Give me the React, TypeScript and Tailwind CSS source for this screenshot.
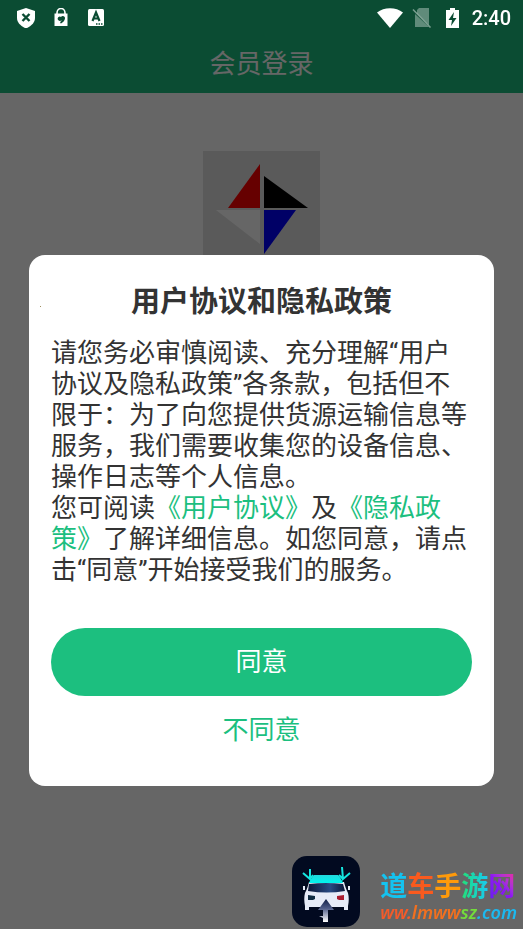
const TITLE = '用户协议和隐私政策'

const SITE_NAME = [
  { char: '道', color: 'text-[#14c3f0]' },
  { char: '车', color: 'text-[#fa5a1e]' },
  { char: '手', color: 'text-[#ff9a0a]' },
]

function StatusBar() {
  return (
    <div className="flex h-9 items-center justify-between pl-4 pr-3 text-white">
      <div className="flex items-center gap-4">
        <svg className="h-5 w-5" viewBox="0 0 20 20" aria-hidden="true">
          <path fill="currentColor" d="M10 0 19 3v7c0 4.500-3.500 8-9 10.500C4.500 18 1 14.500 1 10V3z" />
          <path stroke="#0b4c33" strokeWidth="2.400" d="m6.500 6 7 7m0-7-7 7" />
        </svg>
        <svg className="h-5 w-5" viewBox="0 0 20 20" aria-hidden="true">
          <path fill="none" stroke="currentColor" strokeWidth="1.600" d="M5 7V5a4 4.500 0 0 1 8 0v2" />
          <path fill="currentColor" d="M2.500 5.500h13v12.500h-13z" />
          <path fill="#0b4c33" d="M9 9c1-2 4.500-1 4 1.500-.3 2-2 4-4 5-.8-.5-1-1.200-.6-1.800l1.600-1.300-2.300.6c-2.300-1-2.500-2.800-1.500-3.800s2.400-.8 2.800-.2z" />
        </svg>
        <svg className="h-5 w-5" viewBox="0 0 20 20" aria-hidden="true">
          <rect x="0" y="1" width="16" height="17" rx="1.500" fill="currentColor" />
          <path fill="none" stroke="#0b4c33" strokeWidth="2.200" d="m4.500 13 3.500-8.500 3.500 8.500M6 10.500h4" />
          <path stroke="#0b4c33" strokeWidth="1.500" strokeDasharray="1.500 1" d="M8 16h7" />
        </svg>
      </div>
      <div className="flex items-center gap-2">
        <svg className="h-5 w-7" viewBox="0 0 28 20" aria-hidden="true">
          <path fill="currentColor" d="M1 4.500C8-1.300 20-1.300 27 4.500L14 20z" />
        </svg>
        <svg className="h-5 w-5" viewBox="0 0 20 20" aria-hidden="true">
          <path fill="currentColor" fillOpacity=".35" d="M7 0h10v17L5 5V2zM3 6l14 13H3z" />
          <path stroke="currentColor" strokeOpacity=".45" strokeWidth="1.500" d="m1 1.500 17.500 18" />
        </svg>
        <svg className="ml-1 h-5 w-5" viewBox="0 0 20 20" aria-hidden="true">
          <path fill="currentColor" d="M6 0h5v2h4v18H2V2h4z" />
          <path fill="#0b4c33" d="M10 4 4.500 12H8l-1 6 5.500-8H9z" />
        </svg>
        <span className="font-[Roboto] text-xl font-medium">2:40</span>
      </div>
    </div>
  )
}

function BrandLogo() {
  return (
    <svg className="h-[117px] w-[117px] bg-[#e2e2e2]" viewBox="0 0 117 117" role="img" aria-label="logo">
      <path fill="#ff0000" d="M57 13v44H25z" />
      <path fill="#000000" d="M61 25v32h44z" />
      <path fill="#ffffff" d="M13 59h44v34z" />
      <path fill="#0000ff" d="M61 59h32l-32 44z" />
    </svg>
  )
}

function CarBadge() {
  return (
    <svg className="h-[71px] w-[68px]" viewBox="0 0 68 71" aria-hidden="true">
      <defs>
        <linearGradient id="roof" x2="0" y2="1">
          <stop stopColor="#23d8dd" />
          <stop offset="1" stopColor="#00f5ee" />
        </linearGradient>
        <linearGradient id="glass">
          <stop stopColor="#0b1738" />
          <stop offset=".6" stopColor="#294a83" />
          <stop offset="1" stopColor="#0b1738" />
        </linearGradient>
        <linearGradient id="arrow" x2="0" y2="1">
          <stop stopColor="#101e45" />
          <stop offset=".4" stopColor="#4d5a86" />
          <stop offset="1" stopColor="#ffffff" />
        </linearGradient>
      </defs>
      <rect width="68" height="71" rx="15" fill="#020a20" />
      <path fill="#e6ebf7" d="M17 26c-1 4-2 7-4 11-1 4-1 8 0 13v4h4v-3h35v3h4v-4c1-5 1-9 0-13-2-4-3-7-4-11z" />
      <path fill="url(#roof)" d="M22 19c-2 2-4 5-5 8h34c-1-3-3-6-5-8z" />
      <path fill="url(#glass)" d="M17 28q17-2 34 0l2 7q-18 3-37 0z" />
      <path fill="#e6ebf7" d="M11 30h2v4h-2zM56 30h2v4h-2z" />
      <path fill="#102c42" d="m16 39 7 1v3l-2 1h-5z" />
      <path fill="#a91d30" d="m52 39-7 1v3l2 1h5z" />
      <path fill="url(#arrow)" d="m34 43 8 11h-6v12h-5v-4l-4-2h4v-6h-5z" />
      <path fill="none" stroke="#15e5df" strokeWidth="2" d="m11 17 7 6V13m0 10 3-4M58 17l-7 6-1-12m1 12-4-4" />
    </svg>
  )
}

function Watermark() {
  return (
    <div className="fixed right-1.5 bottom-0.5 z-20 flex items-center gap-5">
      <CarBadge />
      <div className="flex flex-col pt-3 font-['Noto_Sans','Noto_Sans_CJK_SC',sans-serif]">
        <span className="flex text-[27px] leading-7 font-bold">
          {SITE_NAME.map(item => (
            <span key={item.char} className={item.color}>{item.char}</span>
          ))}
          <span className="bg-linear-to-r from-[#27df70] to-[#1fc9f0] bg-clip-text text-transparent">游</span>
          <span className="bg-linear-to-bl from-[#f01f9b] via-[#8e17f2] to-[#641df1] bg-clip-text text-transparent">网</span>
        </span>
        <a href="#" className="text-lg leading-6 font-semibold italic">
          <span className="text-[#f45b2a]">ww.</span>
          <span className="text-[#f2701f]">lmww</span>
          <span className="text-[#73dd3c]">sz</span>
          <span className="text-[#1cb9ef]">.com</span>
        </a>
      </div>
    </div>
  )
}

function AgreementDialog() {
  return (
    <div className="fixed inset-0 z-10 flex items-start bg-black/60 px-[29px] pt-[255px]">
      <div
        role="dialog"
        aria-modal="true"
        aria-labelledby="agreement-title"
        className="relative flex w-full flex-col rounded-2xl bg-white px-[22px] pb-[22px] pt-[29px]"
      >
        <span className="absolute top-[51px] left-[11px] h-px w-px bg-[#a09060]" />
        <h2 id="agreement-title" className="text-center text-[29px] leading-9 font-bold text-[#333]">
          {TITLE}
        </h2>

        <div className="mt-[18px] text-[26px] leading-[31px] text-[#333]">
          <p>
            请您务必审慎阅读、充分理解“用户协议及隐私政策”各条款，包括但不限于：为了向您提供货源运输信息等服务，我们需要收集您的设备信息、操作日志等个人信息。
          </p>
          <p>
            您可阅读<a href="#" className="text-[#1cbf7f]">《用户协议》</a>及<a href="#" className="text-[#1cbf7f]">《隐私政策》</a>了解详细信息。如您同意，请点击“同意”开始接受我们的服务。
          </p>
        </div>

        <button type="button" className="mt-[42px] h-[68px] rounded-full bg-[#1cbf7f] text-[26px] text-white">
          同意
        </button>
        <button type="button" className="h-[68px] text-[26px] text-[#1cbf7f]">
          不同意
        </button>
      </div>
    </div>
  )
}

export default function App() {
  return (
    <div className="min-h-screen bg-white font-[Roboto,'Noto_Sans_CJK_SC',sans-serif]" lang="zh-CN">
      {/* status icons sit above the scrim, the header below it */}
      <div className="fixed inset-x-0 top-0 z-20">
        <StatusBar />
      </div>
      <header className="flex h-[93px] items-center justify-center bg-[#1cbf7f] pt-9">
        <h1 className="text-[26px] text-white">会员登录</h1>
      </header>
      <main className="flex justify-center pt-[58px]">
        <BrandLogo />
      </main>

      <AgreementDialog />
      <Watermark />
    </div>
  )
}
